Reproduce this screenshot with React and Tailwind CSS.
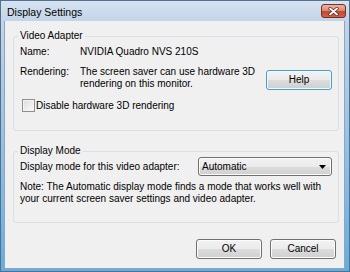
import React from 'react';

const font = { fontFamily: '"Liberation Sans", Arial, sans-serif' };

const VistaButton = ({ children, focused, className = '' }) => (
  <button
    className={`h-[20px] w-[66px] rounded-[3px] border ${
      focused ? 'border-[#3c9fd8]' : 'border-[#707070]'
    } bg-[linear-gradient(to_bottom,#f2f2f2_0%,#ebebeb_50%,#dddddd_50%,#cfcfcf_100%)] shadow-[inset_0_0_0_1px_#fcfcfc] text-[10px] leading-[12px] text-black ${className}`}
  >
    {children}
  </button>
);

const GroupBox = ({ title, children, className = '' }) => (
  <fieldset
    className={`ml-[8px] w-[326px] rounded-[3px] border border-[#d5dfe5] pl-[6px] pr-[6px] ${className}`}
  >
    <legend className="-ml-[2px] px-[2px] leading-[12px]">{title}</legend>
    {children}
  </fieldset>
);

export default function App() {
  return (
    <div
      className="w-[350px] h-[272px] flex flex-col border border-[#54708f] bg-[#bcd1e8] text-[10px] leading-[12px] text-black"
      style={font}
    >
      {/* title bar */}
      <div className="h-[20px] flex items-start justify-between pl-[6px] pr-[3px] bg-gradient-to-b from-[#d6e3f1] to-[#c3d4e8]">
        <span className="mt-[5px] text-[10.5px] leading-[12px]">Display Settings</span>
        <div className="mt-[3px] w-[25px] h-[14px] rounded-[3px] border border-[#7a2e20] bg-[linear-gradient(to_bottom,#e9b3a5_0%,#dc8c78_45%,#c4472c_55%,#d0634a_100%)] flex items-center justify-center">
          <svg width="11" height="9" viewBox="0 0 11 9">
            <path d="M2 1.5 L9 7.5 M9 1.5 L2 7.5" stroke="#5a2418" strokeWidth="3.2" strokeLinecap="round" />
            <path d="M2 1.5 L9 7.5 M9 1.5 L2 7.5" stroke="#ffffff" strokeWidth="1.8" strokeLinecap="round" />
          </svg>
        </div>
      </div>

      {/* frame + client area */}
      <div className="flex-1 flex pl-[3px] pr-[4px] pb-[2px] bg-gradient-to-b from-[#c3d4e8] to-[#62ade0]">
        <div className="flex-1 flex flex-col border border-t-0 border-[#8fa5bd] bg-[#f0f0f0]">
          <GroupBox title="Video Adapter" className="mt-[9px] pb-[18px]">
            <div className="mt-[4px] flex">
              <span className="w-[60px]">Name:</span>
              <span>NVIDIA Quadro NVS 210S</span>
            </div>
            <div className="mt-[8px] flex items-start">
              <span className="w-[60px]">Rendering:</span>
              <span>
                The screen saver can use hardware 3D
                <br />
                rendering on this monitor.
              </span>
              <VistaButton focused className="ml-auto mt-[4px] w-[65px]">
                Help
              </VistaButton>
            </div>
            <div className="mt-[9px] flex items-center">
              <div className="ml-[2px] w-[13px] h-[13px] border border-[#8e8f8f] bg-[linear-gradient(135deg,#dcdcdc,#fbfbfb)] shadow-[inset_0_0_0_1px_#f4f4f4]" />
              <span className="ml-[1px]">Disable hardware 3D rendering</span>
            </div>
          </GroupBox>

          <GroupBox title="Display Mode" className="mt-[14px] pb-[17px]">
            <div className="h-[19px] flex items-center">
              <span>Display mode for this video adapter:</span>
              <div className="ml-auto w-[134px] h-[19px] rounded-[3px] border border-[#707070] bg-[linear-gradient(to_bottom,#f2f2f2_0%,#ebebeb_50%,#dddddd_50%,#cfcfcf_100%)] shadow-[inset_0_0_0_1px_#fcfcfc] flex items-center pl-[3px] pr-[5px]">
                <span>Automatic</span>
                <svg className="ml-auto" width="7" height="4" viewBox="0 0 7 4">
                  <path d="M0 0 H7 L3.5 4 Z" fill="#000" />
                </svg>
              </div>
            </div>
            <p className="mt-[5px]">
              Note: The Automatic display mode finds a mode that works well with
              <br />
              your current screen saver settings and video adapter.
            </p>
          </GroupBox>

          <div className="mt-[16px] flex justify-end gap-[8px] pr-[8px]">
            <VistaButton>OK</VistaButton>
            <VistaButton>Cancel</VistaButton>
          </div>
        </div>
      </div>
    </div>
  );
}
